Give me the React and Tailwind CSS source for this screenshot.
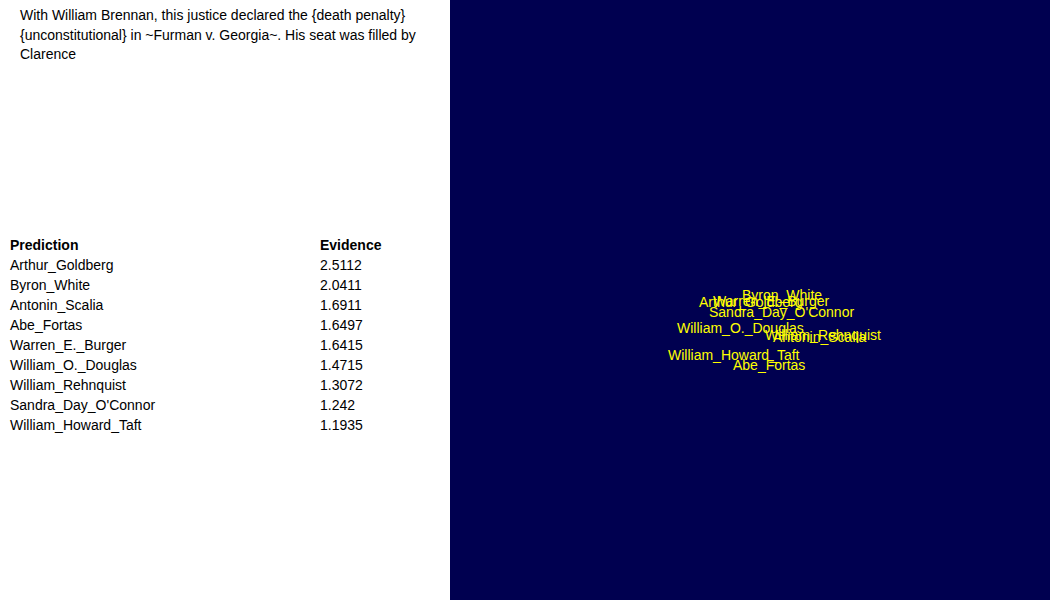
import React from 'react';

const rows = [
    ['Arthur_Goldberg', '2.5112'],
    ['Byron_White', '2.0411'],
    ['Antonin_Scalia', '1.6911'],
    ['Abe_Fortas', '1.6497'],
    ['Warren_E._Burger', '1.6415'],
    ['William_O._Douglas', '1.4715'],
    ['William_Rehnquist', '1.3072'],
    ['Sandra_Day_O\'Connor', '1.242'],
    ['William_Howard_Taft', '1.1935'],
];

// label positions on the plot, relative to the plot panel
const points = [
    { name: 'Byron_White', x: 292, y: 288 },
    { name: 'Arthur_Goldberg', x: 249, y: 295 },
    { name: 'Warren_E._Burger', x: 263, y: 294 },
    { name: 'Sandra_Day_O\'Connor', x: 259, y: 305 },
    { name: 'William_O._Douglas', x: 227, y: 321 },
    { name: 'William_Rehnquist', x: 315, y: 328 },
    { name: 'Antonin_Scalia', x: 323, y: 330 },
    { name: 'William_Howard_Taft', x: 218, y: 348 },
    { name: 'Abe_Fortas', x: 283, y: 358 },
];

const App = () => {
    return (
        <div className="flex w-[1050px] h-[600px] overflow-hidden font-['Liberation_Sans',Arial,sans-serif] text-[14px] text-black">
            <div className="w-[450px] shrink-0 bg-white flex flex-col">
                <p className="px-5 pt-[6px] leading-[19.5px]">
                    With William Brennan, this justice declared the {'{death penalty}'} {'{unconstitutional}'} in ~Furman v. Georgia~. His seat was filled by Clarence
                </p>
                <div className="mt-[170px] pl-[10px] leading-[20px]">
                    <div className="grid grid-cols-[310px_1fr] font-bold">
                        <div>Prediction</div>
                        <div>Evidence</div>
                    </div>
                    {rows.map(([name, value]) => (
                        <div key={name} className="grid grid-cols-[310px_1fr]">
                            <div>{name}</div>
                            <div>{value}</div>
                        </div>
                    ))}
                </div>
            </div>
            <div className="relative flex-1 bg-[#000050]">
                {points.map((p) => (
                    <span
                        key={p.name}
                        className="absolute whitespace-nowrap leading-none text-[#ffff00]"
                        style={{ left: p.x, top: p.y }}
                    >
                        {p.name}
                    </span>
                ))}
            </div>
        </div>
    );
};

export default App;
